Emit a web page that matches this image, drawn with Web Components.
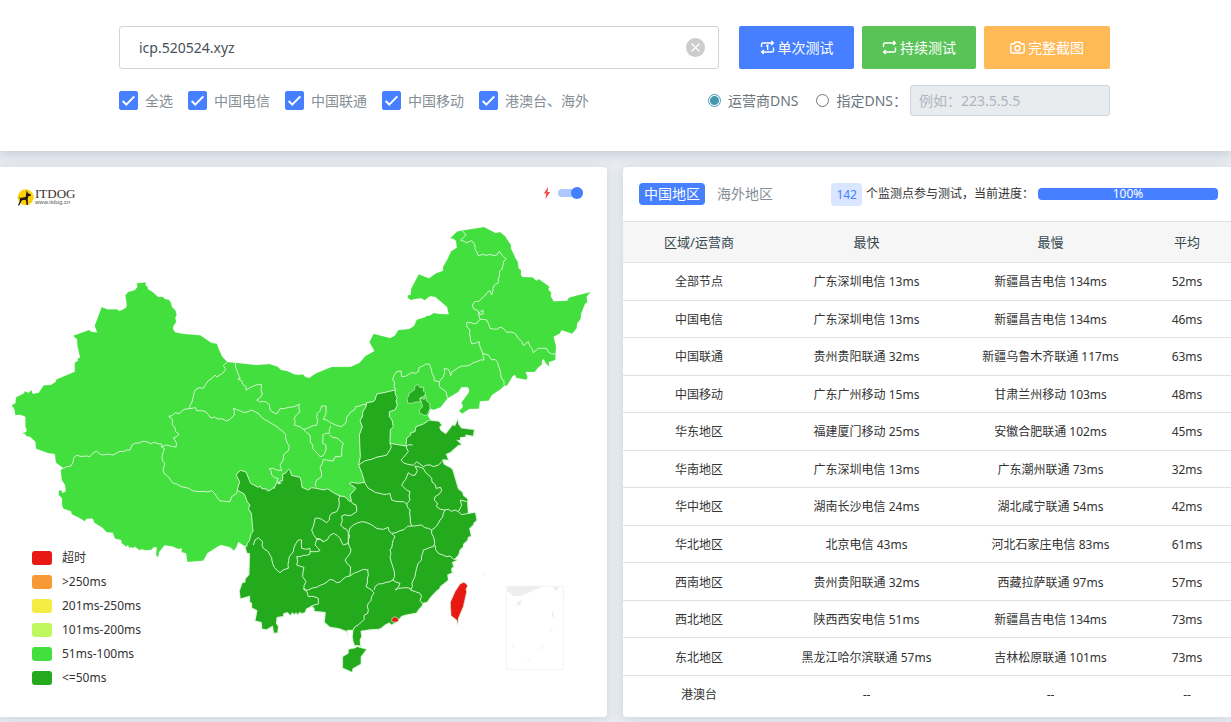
<!DOCTYPE html>
<html lang="zh-CN">
<head>
<meta charset="utf-8">
<meta name="viewport" content="width=device-width, initial-scale=1">
<title>ITDOG 网站测速</title>
<style>
  html { overflow-x: hidden; }
  body {
    margin: 0;
    background: #e9edf2;
    color: #333;
    font: 14px/20px "Noto Sans", "Noto Sans CJK SC", sans-serif;
  }
</style>
</head>
<body>
<speed-page></speed-page>

<script>
function define(name, html, setup) {
  const tpl = document.createElement('template');
  tpl.innerHTML = '<style>*,*::before,*::after{box-sizing:border-box}input,button{font:inherit}</style>' + html;
  customElements.define(name, class extends HTMLElement {
    connectedCallback() {
      if (this.shadowRoot) return;
      this.attachShadow({ mode: 'open' }).append(tpl.content.cloneNode(true));
      if (setup) setup(this, this.shadowRoot);
    }
  });
}

define('test-button', `
  <style>
    :host { display: block; }
    button {
      display: flex; align-items: center; justify-content: center; gap: 3px;
      width: 100%; height: 43px; padding: 0 20px;
      border: 0; border-radius: 2px; color: #fff; white-space: nowrap;
      background: var(--tone, #467fff); cursor: pointer;
    }
  </style>
  <button type="button"><slot name="icon"></slot><slot></slot></button>
`);

define('isp-check', `
  <style>
    :host { display: block; }
    label { display: flex; align-items: center; gap: 7px; color: #868e96; white-space: nowrap; }
    input {
      appearance: none; width: 19px; height: 19px; margin: 0; border-radius: 2px;
      border: 1px solid #467fff; background: #fff;
    }
    input:checked {
      background: #467fff url("data:image/svg+xml,%3Csvg xmlns='http://www.w3.org/2000/svg' viewBox='0 0 17 17'%3E%3Cpath d='M2.7 9l3.6 3.6 8-8.2' fill='none' stroke='white' stroke-width='2'/%3E%3C/svg%3E") center/17px no-repeat;
    }
  </style>
  <label><input type="checkbox" checked><span><slot></slot></span></label>
`);

define('dns-options', `
  <style>
    :host { display: flex; align-items: center; color: #6c757d; white-space: nowrap; }
    label { display: flex; align-items: center; gap: 7px; }
    label + label { margin-left: 18px; }
    [type=radio] {
      appearance: none; width: 13px; height: 13px; margin: 0;
      border: 1px solid #767676; border-radius: 50%; background: #fff;
    }
    [type=radio]:checked { border-color: #4a9bb0; background: radial-gradient(circle, #4398ae 4px, #fff 5px); }
    [type=text] {
      width: 200px; height: 31px; margin-left: 3px; padding: 0 8px;
      border: 1px solid #ced4da; border-radius: 3px; background: #e9ecef;
    }
    ::placeholder { color: #adb5bd; opacity: 1; }
  </style>
  <label><input type="radio" name="dns" checked>运营商DNS</label>
  <label><input type="radio" name="dns">指定DNS：</label>
  <input type="text" aria-label="指定DNS" placeholder="例如：223.5.5.5" disabled>
`);

define('test-header', `
  <style>
    :host { display: block; background: #fff; box-shadow: 0 2px 12px rgba(50, 70, 100, .24); }
    form { max-width: 993px; margin: 0 auto; padding: 26px 2px 35px 0; display: grid; gap: 16px; }
    .row { display: flex; align-items: center; justify-content: space-between; gap: 20px; }
    .field { position: relative; flex: 1; }
    .field input {
      display: block; width: 100%; height: 43px; padding: 0 48px 0 19px;
      border: 1px solid #ced4da; border-radius: 3px; outline: 0; color: #495057; font-size: 14px;
    }
    .clear {
      position: absolute; right: 14px; top: 12px; width: 19px; height: 19px;
      padding: 0; border: 0; border-radius: 50%; background: #ccc; cursor: pointer;
    }
    .clear svg { display: block; width: 19px; }
    .buttons { display: grid; grid-template-columns: 115px 114px 126px; gap: 8px; }
    .icon { width: 15px; height: 15px; fill: none; stroke: #fff; stroke-width: 1.4; }
    .checks { display: flex; gap: 15px; }
  </style>
  <form>
    <div class="row">
      <div class="field">
        <input type="text" aria-label="域名" value="icp.520524.xyz">
        <button class="clear" type="button" aria-label="清空"><svg viewBox="0 0 19 19"><path d="M5.5 5.5l8 8M13.5 5.5l-8 8" stroke="#fff" stroke-width="1.4"/></svg></button>
      </div>
      <div class="buttons">
        <test-button style="--tone:#467fff"><svg slot="icon" class="icon" viewBox="0 0 15 15"><path d="M1.500 7V4.600Q1.500 3 3.100 3H13M11.300 1L13.300 3 11.300 5M13.500 7.500v2.900Q13.500 12 11.900 12H2M3.700 10L1.700 12 3.700 14M6.200 6.200l1.500-.9v4.700"/></svg>单次测试</test-button>
        <test-button style="--tone:#5ac357"><svg slot="icon" class="icon" viewBox="0 0 15 15"><path d="M1.500 7V4.600Q1.500 3 3.100 3H13M11.300 1L13.300 3 11.300 5M13.500 7.500v2.900Q13.500 12 11.900 12H2M3.700 10L1.700 12 3.700 14"/></svg>持续测试</test-button>
        <test-button style="--tone:#ffb956"><svg slot="icon" class="icon" viewBox="0 0 15 15"><path d="M2.200 3.700h2.200L5.500 2h4l1.100 1.700h2.200q1.400 0 1.400 1.400v6.500q0 1.400-1.400 1.400H2.200Q.8 13 .8 11.600V5.100q0-1.400 1.400-1.400z"/><circle cx="7.500" cy="8.200" r="2.500"/></svg>完整截图</test-button>
      </div>
    </div>
    <div class="row">
      <div class="checks">
        <isp-check>全选</isp-check><isp-check>中国电信</isp-check><isp-check>中国联通</isp-check><isp-check>中国移动</isp-check><isp-check>港澳台、海外</isp-check>
      </div>
      <dns-options></dns-options>
    </div>
  </form>
`);

define('site-logo', `
  <style>
    :host { display: flex; align-items: center; gap: 1px; color: #3a2f2c; }
    svg { width: 17px; height: 17px; }
    .name { display: block; font: 13px/11px "Liberation Serif", serif; }
    .url { display: block; font: 6px/7px "Liberation Sans", sans-serif; color: #555; }
  </style>
  <svg viewBox="0 0 51 51" aria-hidden="true"><circle cx="26" cy="25" r="24" fill="#fbd20b"/><path d="M29 4l4 9 8 3 1 4-8 2-2 9 1 17h-4l-3-16-11 2-3 5-6 11-3-1 5-12 1-8-4-6 5 4 16-3z" fill="#231a12"/></svg>
  <div><span class="name">ITDOG</span><span class="url">www.itdog.cn</span></div>
`);

define('mode-switch', `
  <style>
    label { display: flex; align-items: center; gap: 7px; }
    svg { width: 8px; height: 14px; }
    input {
      appearance: none; display: flex; align-items: center; justify-content: flex-end;
      width: 25px; height: 8px; margin: 0; border-radius: 4px; background: #adc7ff;
    }
    input::before { content: ""; flex: none; width: 12px; height: 12px; border-radius: 50%; background: #467fff; }
  </style>
  <label>
    <svg viewBox="0 0 8 14" aria-hidden="true"><path d="M5 1L.8 7.600h2.400L2.400 13 7.200 5.900H4.600z" fill="#f5504d"/></svg>
    <input type="checkbox" role="switch" aria-label="快速模式" checked>
  </label>
`);

define('map-legend', `
  <style>
    ul { margin: 0; padding: 0; list-style: none; display: grid; gap: 4px; font-size: 12px; }
    li { display: flex; align-items: center; gap: 10px; color: #333; }
    li::before { content: ""; width: 20px; height: 14px; border-radius: 3px; background: var(--c); }
  </style>
  <ul>
    <li style="--c:#e71912">超时</li>
    <li style="--c:#f79934">&gt;250ms</li>
    <li style="--c:#f5ec43">201ms-250ms</li>
    <li style="--c:#bff75e">101ms-200ms</li>
    <li style="--c:#43df3e">51ms-100ms</li>
    <li style="--c:#24aa1d">&lt;=50ms</li>
  </ul>
`);

/* Survey sheets: each outline is drawn on sheets that have their own origin on the map. */
const SHEET = { A: [0, 480], B: [900, 510], C: [0, 1290], D: [900, 1320], E: [1020, 1140], F: [660, 1140], G: [690, 1440] };
function trace(list) {
  const out = [];
  for (let i = 0; i < list.length; i += 2) {
    const [ox, oy] = SHEET[list[i]];
    for (const p of list[i + 1].trim().split(/\s+/)) {
      const [x, y] = p.split(',').map(Number);
      out.push([x + ox, y + oy]);
    }
  }
  return out;
}
const line = pts => 'M' + pts.map(p => p.join(' ')).join('L');
const area = pts => line(pts) + 'Z';
/* Province borders get small kinks between their survey points. */
let seed = 7;
function rough(pts) {
  const out = [pts[0]];
  for (let i = 1; i < pts.length; i++) {
    const [ax, ay] = pts[i - 1], [bx, by] = pts[i], len = Math.hypot(bx - ax, by - ay);
    const n = Math.floor(len / 10);
    for (let k = 1; k < n; k++) {
      seed = (seed * 1103515245 + 12345) % 2147483648;
      const off = (seed / 2147483648 - .5) * 8, t = k / n;
      out.push([Math.round(ax + (bx - ax) * t - (by - ay) / len * off), Math.round(ay + (by - ay) * t + (bx - ax) / len * off)]);
    }
    out.push([bx, by]);
  }
  return line(out);
}

const NORTH = ['A', `35,736 46,730 48,712 72,700 74,694 86,698 94,690 98,701 116,698 131,676 152,675 166,666 170,658 224,635 224,608 234,602 233,596 240,592 232,558 231,538 219,527 267,510 276,516 291,517 284,497 305,441 322,448 351,448 359,453 378,443 380,434 376,406 384,396 405,390 412,381 410,370 438,367 437,376 443,380 444,387 459,397 475,411 488,410 495,417 507,419 513,428 516,440 527,452 530,464 526,474 529,486 520,498 520,509 526,517 548,521 601,526 634,548 651,551 656,566 667,590 682,606 706,608 769,615 808,612 834,620 842,629 862,633 882,643 900,644`,
 'B', `10,613 13,619 27,624 48,610 94,591 152,590 179,578 196,558 223,543 208,516 221,491 270,504 284,497 295,480 327,477 342,468 350,449 376,441 380,437 388,437 401,429 421,432 446,433 441,411 406,381 390,379 374,391 363,385 341,388 333,391 323,383 323,376 332,374 333,357 356,313 387,325 408,310 429,302 429,291 442,268 453,244 470,233 468,213 460,206 450,205 472,184 552,171 587,189 600,186 617,200 621,208 633,225 633,235 646,263 654,277 656,295 663,300 663,315 668,321 698,322 709,332 716,327 749,350 745,358 754,368 752,378 761,394 802,392 806,383 827,377 872,366 860,380 862,397 855,402 844,430 842,447 832,460 830,475 817,491 785,481 779,491 761,500 768,528 766,570 746,577 748,590 737,580 731,568 727,570 725,585 716,591 704,606 677,606 683,622 679,629 649,624 645,615 638,619 622,646 612,648 602,658 576,675 566,692 540,694 537,716 508,717 486,731 477,722 486,714 489,708 484,698 507,666 507,656 502,652 484,652 475,666 443,685 422,712 401,720 392,716 384,738`];
const COAST = ['B', `392,750 418,753 427,766 420,771 423,780 437,790 458,763 464,766 474,743 477,762 485,773 524,778 521,800 498,796 498,802 482,803 482,813 489,814`,
 'D', `474,2 488,14 474,18 470,22 452,38 440,43 448,62 430,60 433,72 452,82 459,88 476,146 489,156 491,166 504,176 504,194 506,219 527,216 532,241 522,250 522,254 510,266 515,290 506,292 503,303 492,312 490,322 481,330 477,345 467,356 474,361 458,368 463,382 456,385 456,394 460,398 444,405 446,420 440,426 422,440 419,448 412,452 395,470 381,488 371,490 366,500 358,508 350,520 318,526 305,530 293,545 275,556 267,550 255,556 245,565 235,569 210,570 184,574 186,590 181,600 183,618 163,618 158,603 156,590 158,572 143,572 143,590 139,575 118,567 89,562 72,547 75,518 42,515 41,505 36,500 20,507 16,518 5,522 0,518`,
 'C', `892,556 888,550 883,555 877,550 872,558 862,549 852,551 851,560 832,563 830,580 836,590 834,610 820,610 817,590 800,600 785,598 783,578 764,573 770,542 754,534 754,520 748,516 748,500 720,508 717,483 726,457 734,456 735,446 746,434 748,372 740,370 733,348`];
const WEST = ['C', `715,336 710,350 702,362 690,352 662,345 650,352 622,370 610,392 562,396 558,370 545,367 545,355 534,357 520,350 494,346 478,365 474,382 468,376 470,352 461,352 453,360 435,361 425,358 418,361 405,350 398,354 390,351 388,357 384,345 379,350 365,340 363,330 345,326 338,308 320,307 308,294 283,278 278,266 260,266 254,274 238,264 215,253 213,244 190,236 186,225 186,205 176,195 176,182 184,181 188,189 197,184 195,165 185,150 182,120 190,115 168,98 164,72 145,70 125,62 108,56 106,35 90,20 80,19 75,12 66,10 78,6 80,0`, 'A', '76,800 76,770 60,764 46,766 43,748'];
const SOUTH_EDGE = ['C', `740,350 742,340 748,332 754,310 759,305 754,250 745,236 750,225 742,216 733,192 712,180 719,155 709,137 711,130 722,121 738,126 752,160 775,172 781,168 785,176 800,177 803,183 812,180 820,172 822,176 830,158 838,162 840,153 848,152 848,132 856,130 866,118 871,122 874,136`,
 'D', `0,112 4,125 6,142 25,150 35,143 50,145 72,150 83,146 100,158 120,168 135,170 148,184 154,182 150,165 168,145 148,130 155,127 175,130 194,127 186,100 176,75 181,50 179,10`,
 'B', `179,810 178,795 187,770 180,752 188,738 188,726 198,710 200,698 220,695 225,690 230,672 260,666 285,660 286,672 292,686 288,690 292,706 284,720 268,725 268,740 276,750 280,770 271,780 270,820 318,828 320,805 332,795 332,788 345,785 348,770 370,762 385,752`];

const LIGHT = area(trace([...NORTH, ...COAST, ...WEST]));
const DARK = area(trace([...SOUTH_EDGE, ...COAST]));
const SPOTS = [
  ['#24aa1d', 'E', '201,55 207,47 205,42 225,28 222,21 233,13 240,23 252,21 249,32 257,39 253,48 240,54 241,66 228,66 215,70 203,69'],
  ['#24aa1d', 'E', '240,54 253,58 257,46 259,62 269,70 270,85 262,105 252,106 238,98 240,88 248,80'],
  ['#24aa1d', 'D', '145,628 165,624 172,620 200,628 183,650 183,672 158,686 157,697 128,684 128,650 145,640'],
  ['#e71912', 'D', '491,427 497,430 503,437 498,448 500,455 490,500 475,535 473,555 470,540 453,527 451,487 465,455 480,432'],
  ['#e71912', 'D', '275,541 277,534 285,530 293,534 296,541 292,546 276,546']
].map(([c, s, p]) => `<path fill="${c}" d="${area(trace([s, p]))}"/>`).join('');

const BORDERS = [
  ['A', '682,606 670,616 677,628 668,640 650,651 645,645 625,662 610,685 587,688 576,726 569,740 569,746 506,769 518,780 516,794 537,822 520,833 530,850 528,861 500,855 485,860'],
  ['A', '569,746 587,743 590,752 605,752 625,764 632,774 665,776 680,783 690,778 703,765'],
  ['A', '706,608 721,655 713,657 738,680 738,690'],
  ['F', '78,30 100,18 125,14 127,42 110,60 148,74 150,90 170,102 180,86 205,82 238,72 240,95 222,115 222,135 250,148 290,135 292,100 305,78 318,78 318,100 310,118 340,132 365,140 378,128 380,112 408,80 440,72'],
  ['F', '43,105 40,84 72,98 95,90 125,112 160,134 190,155 197,175 208,200 205,212 190,225 187,245 180,255 185,272 170,270 160,265 148,266 155,285 175,295 170,305 185,310'],
  ['F', '250,148 270,165 278,205 300,230 308,228 318,210 318,195 308,190 308,165 328,160 332,138'],
  ['F', '328,165 370,190 365,228 345,230 340,243 310,238 300,262 305,290 290,300 288,320'],
  ['C', '190,115 213,108 230,75 270,80 290,63 308,75 340,75 360,64 390,60 396,45 440,35 485,42 485,52 494,56 486,80 494,100 492,130 520,160 555,172 600,185 635,182 645,192 650,200 660,213 690,215 695,200 710,190 712,180'],
  ['G', '70,195 75,180 85,173 98,185 100,205 115,215 140,270 150,278 175,265 178,230 190,215 205,180 215,180 215,205 240,205 240,222 200,230 200,255 222,262 218,290 228,305 222,330'],
  ['G', '330,45 328,70 320,95 305,100 290,128 275,118 255,115 245,150 258,175 280,185 310,160 330,175 340,195 355,190 355,158 332,135 335,108 365,105 380,95 378,75 362,62'],
  ['G', '240,215 270,212 255,195 260,178 280,185'],
  ['G', '222,330 260,322 300,298 320,308 360,288 385,275 400,268 415,270'],
  ['G', '355,158 360,220 345,240 362,260 360,288'],
  ['G', '222,325 235,350 265,355 265,372 240,380'],
  ['D', '203,390 205,405 198,440 215,450 222,460 205,490 205,510 185,545 165,560 158,572'],
  ['D', '222,450 235,432 270,425 278,420 300,430 285,450 330,445 332,450 360,460 368,500'],
  ['D', '146,280 150,264 185,245 210,252 230,265 250,268 265,262 275,280 285,290 270,330 275,370 283,395 278,422'],
  ['D', '275,280 300,272 335,258 330,210 320,192'],
  ['D', '335,258 365,255 395,270 403,300 400,320 370,330 365,360 350,385 345,410 332,450'],
  ['D', '405,315 415,340 440,350 450,348 472,360'],
  ['D', '395,270 420,240 435,210 475,215 485,224 506,219'],
  ['D', '476,213 485,196 481,180 500,185'],
  ['D', '435,210 410,200 405,170 425,152 422,142 408,145 395,115 370,85 345,78'],
  ['D', '345,78 352,92 345,106 325,98 305,135 330,155 330,180 320,192'],
  ['D', '430,60 415,75 400,80 380,75 370,80 350,65 340,76 320,72 303,60 325,35 318,20 338,15'],
  ['D', '176,75 215,58 260,45 270,30 270,10'],
  ['D', '194,127 205,145 240,160 270,160 275,180 300,185 320,192'],
  ['D', '163,618 185,621'],
  ['B', '488,183 498,195 482,210 500,218 515,212 525,225 535,258 560,256 590,255 598,243 618,266 598,305 595,338 583,345 575,375 570,362 517,405 538,434 549,432 549,420 535,430 540,448 560,450 570,475 610,475 620,487 645,490 655,505 670,527 685,515 700,548 715,535 740,535 755,552 766,552'],
  ['B', '540,448 530,460 500,458 510,480 515,522 538,515 548,550 552,570 520,578 465,600 452,617 445,598 433,595 430,620 418,635 403,632 395,600 388,583 358,592 355,605 305,620 303,603 290,605 278,628 282,650 288,660'],
  ['B', '548,550 565,555 575,570 585,568 600,600 612,646'],
  ['B', '418,635 418,650 438,665 443,685']
].map(b => rough(trace(b))).join('');

define('result-map', `
  <style>
    :host {
      display: grid; grid-template: auto 1fr auto / 1fr auto;
      background: #fff; border-radius: 0 4px 4px 0;
      box-shadow: 0 2px 12px rgba(50, 70, 100, .14);
    }
    .china { grid-area: 1 / 1 / 4 / 3; display: block; width: 100%; }
    site-logo { grid-area: 1 / 1; align-self: start; padding: 21px 0 0 17px; }
    mode-switch { grid-area: 1 / 2; padding: 19px 24px 0 0; }
    map-legend { grid-area: 3 / 1; justify-self: start; padding: 0 0 29px 32px; }
  </style>
  <svg class="china" viewBox="0 501 1821 1650" role="img" aria-label="中国地图">
    <path fill="#43df3e" stroke="#fff" stroke-opacity=".5" stroke-width="1" d="${LIGHT}"/>
    <path fill="#24aa1d" stroke="#d2f5d0" stroke-width="3" stroke-linejoin="round" d="${DARK}"/>
    <path fill="none" stroke="#fff" stroke-width="5" d="${line(trace(COAST))}" opacity=".55"/>
    <g stroke="#d2f5d0" stroke-width="2">${SPOTS}</g>
    <path fill="none" stroke="#d2f5d0" stroke-width="3" stroke-linejoin="round" d="${BORDERS}"/>
    <g transform="translate(900 1320)" fill="#eee">
      <rect x="619" y="439" width="171" height="249" fill="none" stroke="#f3f3f3" stroke-width="3"/>
      <path d="M621 444L630 438H728L700 452 660 468H640L621 452zM760 441H776L769 456zM652 485L667 479 660 495 650 497zM783 456l-5 14 2-1zM756 516h5v14l-5 2zM650 522l6 10-2-1zM665 565l-13 14 2-1zM760 560l-10 14 6-2zM636 612l5 18-1-14zM731 610l-12 18 7-2zM680 658h11l-3 3h-5zM547 408l8-5 2 3z"/>
    </g>
  </svg>
  <site-logo></site-logo>
  <mode-switch></mode-switch>
  <map-legend></map-legend>
`);

define('test-progress', `
  <style>
    :host { display: flex; align-items: center; gap: 4px; font-size: 12px; white-space: nowrap; }
    .count { padding: 0 5px; border-radius: 4px; background: #dae5ff; color: #467fff; line-height: 23px; }
    .bar { width: 180px; border-radius: 4px; background: #467fff; color: #fff; line-height: 12px; text-align: center; }
  </style>
  <span class="count">142</span>
  <span>个监测点参与测试，当前进度：</span>
  <div class="bar" role="progressbar" aria-label="当前进度" aria-valuenow="100">100%</div>
`);

define('result-table', `
  <style>
    :host {
      display: flex; flex-direction: column; padding-bottom: 4px;
      background: #fff; border-radius: 4px 0 0 4px;
      box-shadow: 0 2px 12px rgba(50, 70, 100, .14);
    }
    .bar { display: flex; align-items: center; justify-content: space-between; height: 54px; padding: 0 13px 0 16px; }
    .tabs { display: flex; gap: 7px; }
    .tabs button { padding: 0 5px; border: 0; border-radius: 4px; background: none; color: #868e96; line-height: 22px; }
    .tabs [aria-selected=true] { background: #467fff; color: #fff; }
    table { flex: 1; width: 100%; table-layout: fixed; border-collapse: collapse; text-align: center; font-size: 12px; line-height: 18px; }
    col:nth-child(1) { width: 152px; }
    col:nth-child(2) { width: 183px; }
    col:nth-child(3) { width: 185px; }
    col:nth-child(4) { width: 88px; }
    th, td { padding: 0; border-top: 1px solid #dee2e6; font-weight: 400; white-space: nowrap; }
    th { height: 41px; background: #f6f6f6; font-size: 13px; color: #37474f; }
    td { height: 37px; padding-top: 2px; color: #333; }
  </style>
  <div class="bar">
    <div class="tabs" role="tablist"><button type="button" role="tab" aria-selected="true">中国地区</button><button type="button" role="tab" aria-selected="false">海外地区</button></div>
    <test-progress></test-progress>
  </div>
  <table>
    <colgroup><col><col><col><col></colgroup>
    <thead><tr><th>区域/运营商</th><th>最快</th><th>最慢</th><th>平均</th></tr></thead>
    <tbody></tbody>
  </table>
`, (host, root) => {
  const rows = [
    ['全部节点', '广东深圳电信 13ms', '新疆昌吉电信 134ms', '52ms'],
    ['中国电信', '广东深圳电信 13ms', '新疆昌吉电信 134ms', '46ms'],
    ['中国联通', '贵州贵阳联通 32ms', '新疆乌鲁木齐联通 117ms', '63ms'],
    ['中国移动', '广东广州移动 15ms', '甘肃兰州移动 103ms', '48ms'],
    ['华东地区', '福建厦门移动 25ms', '安徽合肥联通 102ms', '45ms'],
    ['华南地区', '广东深圳电信 13ms', '广东潮州联通 73ms', '32ms'],
    ['华中地区', '湖南长沙电信 24ms', '湖北咸宁联通 54ms', '42ms'],
    ['华北地区', '北京电信 43ms', '河北石家庄电信 83ms', '61ms'],
    ['西南地区', '贵州贵阳联通 32ms', '西藏拉萨联通 97ms', '57ms'],
    ['西北地区', '陕西西安电信 51ms', '新疆昌吉电信 134ms', '73ms'],
    ['东北地区', '黑龙江哈尔滨联通 57ms', '吉林松原联通 101ms', '73ms'],
    ['港澳台', '--', '--', '--']
  ];
  const body = root.querySelector('tbody');
  for (const r of rows) {
    const tr = body.insertRow();
    for (const c of r) tr.insertCell().textContent = c;
  }
});

define('speed-page', `
  <style>
    :host { display: block; }
    main { display: grid; grid-template-columns: 607fr 608fr; gap: 16px; padding: 16px 0 5px; }
  </style>
  <test-header></test-header>
  <main><result-map></result-map><result-table></result-table></main>
`);
</script>
</body>
</html>
